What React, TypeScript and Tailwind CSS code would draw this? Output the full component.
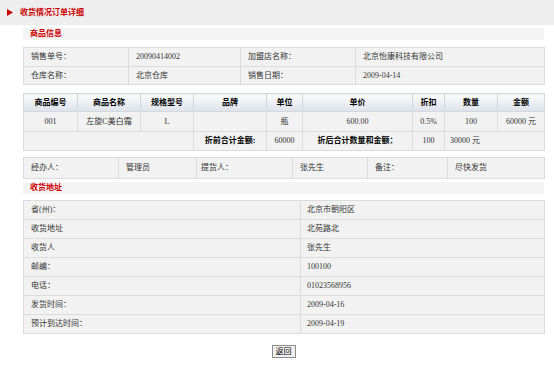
import React from "react";

const F = { fontFamily: '"Liberation Serif", "Noto Sans CJK SC", serif' };

const td = "border border-[#dcdcdc] bg-[#f2f2f2] px-[7px] text-left font-normal text-[#333] whitespace-nowrap";
const tdc = "border border-[#dcdcdc] bg-[#f2f2f2] px-[2px] text-center text-[#333] whitespace-nowrap";
const th = "border border-[#d4d8de] bg-gradient-to-b from-[#fbfcfd] to-[#dde2ea] text-center font-bold text-black whitespace-nowrap";

function SectionBar({ title }: { title: string }) {
  return (
    <div className="h-[12px] bg-[#f4f4f4] pl-[7px] flex items-center text-[8px] font-bold text-[#cc0000] leading-none">
      {title}
    </div>
  );
}

export default function App() {
  const addr: [string, string][] = [
    ["省(州)：", "北京市朝阳区"],
    ["收货地址", "北苑路北"],
    ["收货人", "张先生"],
    ["邮编：", "100100"],
    ["电话：", "01023568956"],
    ["发货时间：", "2009-04-16"],
    ["预计到达时间：", "2009-04-19"],
  ];
  return (
    <div className="w-[554px] h-[366px] bg-white overflow-hidden text-[8px] leading-none" style={F}>
      <div className="h-[25px] bg-[#eeeeee] flex items-center pl-[7px]">
        <svg width="6" height="7" viewBox="0 0 6 7" className="mr-[7px]">
          <polygon points="0,0 6,3.5 0,7" fill="#cc0000" />
        </svg>
        <span className="font-bold text-[#cc0000] text-[8px]">收货情况订单详细</span>
      </div>

      <div className="pl-[23px] pr-[10px]">
        <div className="mt-[3px]">
          <SectionBar title="商品信息" />
        </div>

        <table className="mt-[7px] w-[521px] border-collapse table-fixed">
          <colgroup>
            <col className="w-[105px]" />
            <col className="w-[112px]" />
            <col className="w-[115px]" />
            <col className="w-[189px]" />
          </colgroup>
          <tbody>
            <tr className="h-[19px]">
              <td className={td}>销售单号：</td>
              <td className={td}>20090414002</td>
              <td className={td}>加盟店名称：</td>
              <td className={td}>北京怡康科技有限公司</td>
            </tr>
            <tr className="h-[18px]">
              <td className={td}>仓库名称：</td>
              <td className={td}>北京仓库</td>
              <td className={td}>销售日期：</td>
              <td className={td}>2009-04-14</td>
            </tr>
          </tbody>
        </table>

        <table className="mt-[8px] w-[521px] border-collapse table-fixed">
          <colgroup>
            <col className="w-[54px]" />
            <col className="w-[63px]" />
            <col className="w-[53px]" />
            <col className="w-[73px]" />
            <col className="w-[36px]" />
            <col className="w-[110px]" />
            <col className="w-[32px]" />
            <col className="w-[53px]" />
            <col className="w-[47px]" />
          </colgroup>
          <thead>
            <tr className="h-[18px]">
              {["商品编号", "商品名称", "规格型号", "品牌", "单位", "单价", "折扣", "数量", "金额"].map((h) => (
                <th key={h} className={th}>{h}</th>
              ))}
            </tr>
          </thead>
          <tbody>
            <tr className="h-[20px]">
              <td className={tdc}>001</td>
              <td className={tdc}>左旋C美白霜</td>
              <td className={tdc}>L</td>
              <td className={tdc}></td>
              <td className={tdc}>瓶</td>
              <td className={tdc}>600.00</td>
              <td className={tdc}>0.5%</td>
              <td className={tdc}>100</td>
              <td className={tdc}>60000 元</td>
            </tr>
            <tr className="h-[19px]">
              <td className={tdc} colSpan={3}></td>
              <td className={tdc + " font-bold text-black"}>折前合计金额:</td>
              <td className={tdc}>60000</td>
              <td className={tdc + " font-bold text-black"}>折后合计数量和金额：</td>
              <td className={tdc}>100</td>
              <td className={td + " pl-[5px]"} colSpan={2}>30000 元</td>
            </tr>
          </tbody>
        </table>

        <table className="mt-[6px] w-[521px] border-collapse table-fixed">
          <colgroup>
            <col className="w-[95px]" />
            <col className="w-[78px]" />
            <col className="w-[96px]" />
            <col className="w-[75px]" />
            <col className="w-[80px]" />
            <col className="w-[97px]" />
          </colgroup>
          <tbody>
            <tr className="h-[21px]">
              <td className={td}>经办人：</td>
              <td className={td}>管理员</td>
              <td className={td + " pl-[4px]"}>提货人：</td>
              <td className={td}>张先生</td>
              <td className={td}>备注：</td>
              <td className={td}>尽快发货</td>
            </tr>
          </tbody>
        </table>

        <div className="mt-[3px]">
          <SectionBar title="收货地址" />
        </div>

        <table className="mt-[6px] w-[521px] border-collapse table-fixed">
          <colgroup>
            <col className="w-[277px]" />
            <col className="w-[244px]" />
          </colgroup>
          <tbody>
            {addr.map(([k, v]) => (
              <tr key={k} className="h-[19px]">
                <td className={td}>{k}</td>
                <td className={td + " pl-[6px]"}>{v}</td>
              </tr>
            ))}
          </tbody>
        </table>

        <div className="mt-[11px] flex justify-center">
          <button className="h-[13px] px-[3px] border border-[#8c8c8c] bg-[#f0f0f0] text-[8px] leading-none text-black" style={F}>
            返回
          </button>
        </div>
      </div>
    </div>
  );
}
